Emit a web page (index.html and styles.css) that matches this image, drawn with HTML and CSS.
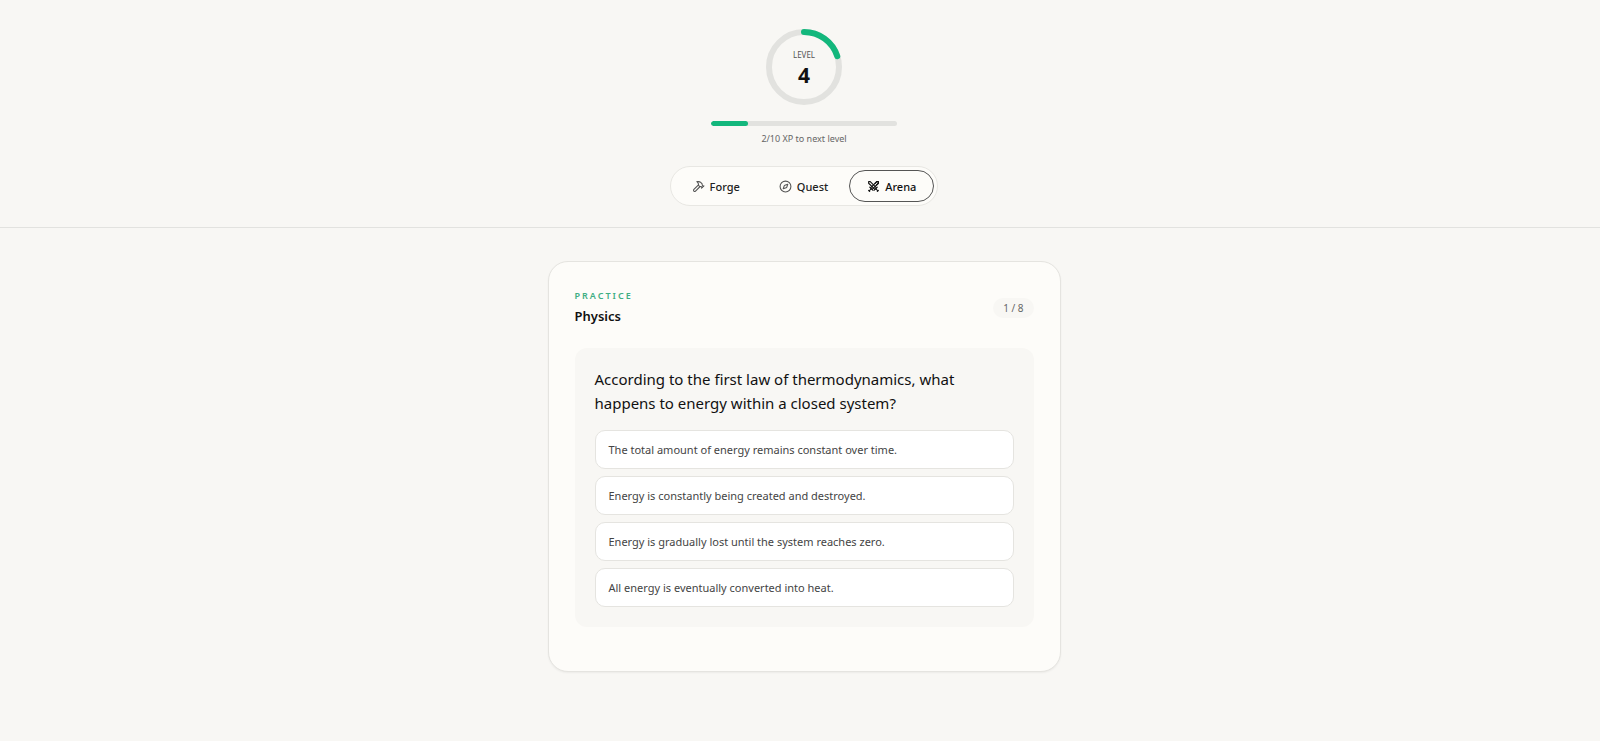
FILE: index.html
```html
<!DOCTYPE html>
<html lang="en">
<head>
<meta charset="utf-8">
<title>Arena</title>
<link rel="stylesheet" href="styles.css">
</head>
<body>
<header class="header">
  <div class="level">
    <svg class="level-ring" viewBox="0 0 76 76" fill="none" stroke-width="6" aria-hidden="true">
      <circle class="ring-track" cx="38" cy="38" r="35"/>
      <circle class="ring-value" cx="38" cy="38" r="35" pathLength="100" stroke-dasharray="20 100" stroke-linecap="round" transform="rotate(-90 38 38)"/>
    </svg>
    <div class="level-text">
      <span class="level-label">LEVEL</span>
      <strong class="level-number">4</strong>
    </div>
  </div>
  <div class="xp">
    <div class="xp-bar"><div class="xp-fill" style="width:20%"></div></div>
    <p class="xp-text">2/10 XP to next level</p>
  </div>
  <nav class="tabs">
    <button class="tab" type="button">
      <svg class="icon" viewBox="0 0 24 24"><path d="m15 12-8.500 8.500a2.120 2.120 0 0 1-3-3L12 9"/><path d="M17.640 15 22 10.910"/><path d="m20.910 11.700-1.250-1.250c-.6-.6-.93-1.400-.93-2.250v-.86L16.010 4.600a5.560 5.560 0 0 0-3.940-1.640H9l.92.82A6.180 6.180 0 0 1 12 8.400v1.560l2 2h2.470l2.260 1.910"/></svg>
      Forge
    </button>
    <button class="tab" type="button">
      <svg class="icon" viewBox="0 0 24 24"><circle cx="12" cy="12" r="10"/><path d="m16.240 7.760-1.804 5.411a2 2 0 0 1-1.265 1.265L7.760 16.240l1.804-5.411a2 2 0 0 1 1.265-1.265z"/></svg>
      Quest
    </button>
    <button class="tab tab-active" type="button">
      <svg class="icon" viewBox="0 0 24 24"><path d="M14.500 17.500 3 6V3h3l11.500 11.500"/><path d="m13 19 6-6"/><path d="m16 16 4 4"/><path d="m19 21 2-2"/><path d="M14.500 6.500 18 3h3v3l-3.500 3.500"/><path d="M9.500 17.500 21 6V3h-3L6.500 14.500"/><path d="m5 13 6 6"/><path d="m8 16-4 4"/><path d="m3 19 2 2"/></svg>
      Arena
    </button>
  </nav>
</header>
<main class="main">
  <section class="card">
    <div class="card-head">
      <div>
        <p class="eyebrow">PRACTICE</p>
        <h1 class="subject">Physics</h1>
      </div>
      <span class="counter">1 / 8</span>
    </div>
    <div class="panel">
      <h2 class="question">According to the first law of thermodynamics, what happens to energy within a closed system?</h2>
      <div class="options">
        <button class="option" type="button">The total amount of energy remains constant over time.</button>
        <button class="option" type="button">Energy is constantly being created and destroyed.</button>
        <button class="option" type="button">Energy is gradually lost until the system reaches zero.</button>
        <button class="option" type="button">All energy is eventually converted into heat.</button>
      </div>
    </div>
  </section>
</main>
</body>
</html>
```
FILE: styles.css
```css
* { box-sizing: border-box; }
body {
  margin: 0;
  background: #f8f7f4;
  color: #111;
  font-family: "Noto Sans", "Open Sans", sans-serif;
}
h1, h2, p { margin: 0; }
button { font: inherit; color: inherit; }
.header {
  display: flex;
  flex-direction: column;
  align-items: center;
  padding: 29px 16px 21px 24px;
  border-bottom: 1px solid #e2e2df;
}
.level { display: grid; place-items: center; }
.level-ring, .level-text { grid-area: 1 / 1; }
.level-ring { width: 76px; height: 76px; }
.ring-track { stroke: #e2e2df; }
.ring-value { stroke: #13b77c; }
.level-text { display: flex; flex-direction: column; align-items: center; padding-top: 3px; }
.level-label { font-size: 8px; line-height: 12px; color: #555; }
.level-number { font-family: "Open Sans", sans-serif; font-size: 21px; line-height: 28px; font-weight: 700; }
.xp { width: 186px; margin-top: 16px; }
.xp-bar { height: 5px; border-radius: 3px; background: #e2e2df; overflow: hidden; }
.xp-fill { height: 100%; border-radius: 3px; background: #13b77c; }
.xp-text { margin-top: 6px; font-size: 9px; line-height: 14px; text-align: center; color: #666; }
.tabs {
  display: flex;
  gap: 3px;
  margin-top: 20px;
  padding: 3px;
  border: 1px solid #e8e7e3;
  border-radius: 24px;
  background: #fdfcf9;
}
.tab {
  display: flex;
  align-items: center;
  gap: 5px;
  height: 32px;
  padding: 0 17px;
  border: 1px solid transparent;
  border-radius: 16px;
  background: none;
  color: #222;
  font-size: 11px;
  font-weight: 500;
}
.tab-active { border-color: #555; color: #111; }
.icon {
  width: 13px;
  height: 13px;
  fill: none;
  stroke: #555;
  stroke-width: 2;
  stroke-linecap: round;
  stroke-linejoin: round;
}
.tab-active .icon { stroke: #111; }
.main { display: flex; justify-content: center; padding: 33px 16px 33px 24px; }
.card {
  width: 100%;
  max-width: 513px;
  padding: 26px 26px 44px;
  border: 1px solid #e5e4e0;
  border-radius: 20px;
  background: #fdfcf9;
  box-shadow: 0 1px 2px #0000000d;
}
.card-head { display: flex; align-items: center; justify-content: space-between; margin-bottom: 20px; }
.eyebrow { font-size: 9px; line-height: 16px; font-weight: 600; letter-spacing: 2px; color: #3fae83; }
.subject { font-size: 13px; line-height: 24px; font-weight: 600; }
.counter { padding: 3px 10px; border-radius: 10px; background: #f8f7f4; font-size: 10px; line-height: 14px; color: #666; }
.panel { padding: 19px 20px 20px; border-radius: 12px; background: #f8f7f4; }
.question { font-size: 15px; line-height: 24px; font-weight: 400; }
.options { display: grid; gap: 7px; margin-top: 15px; }
.option {
  min-height: 39px;
  padding: 8px 13px;
  border: 1px solid #e5e4e0;
  border-radius: 10px;
  background: #fff;
  color: #444;
  font-size: 11px;
  line-height: 20px;
  text-align: left;
}
```
